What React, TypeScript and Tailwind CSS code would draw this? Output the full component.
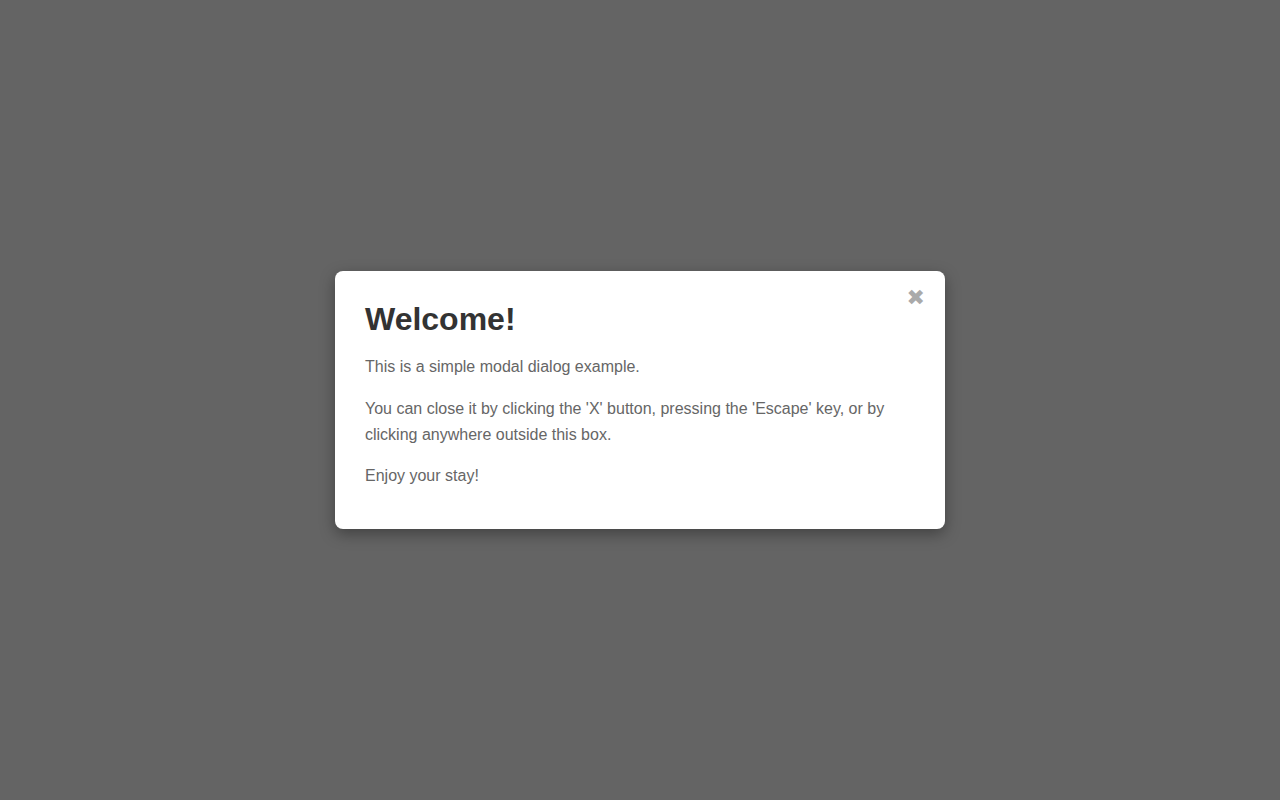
export default function App() {
  return (
    <div className="flex min-h-screen items-center justify-center bg-[#646464] font-['Liberation_Sans',Arial,sans-serif]">
      <div
        role="dialog"
        aria-labelledby="welcome-title"
        className="relative w-[610px] rounded-lg bg-white px-[30px] pt-[30px] pb-[25px] shadow-[0_5px_15px_rgba(0,0,0,0.35)]"
      >
        <button
          type="button"
          aria-label="Close"
          className="absolute right-[20px] top-[16px] text-[22px] leading-none text-[#aaaaaa] font-['DejaVu_Sans',sans-serif]"
        >
          ✖
        </button>
        <h2 id="welcome-title" className="text-[32px] font-bold leading-[37px] text-[#333333]">
          Welcome!
        </h2>
        <div className="mt-[16px] flex flex-col text-base leading-[26px] text-[#666666]">
          <p>This is a simple modal dialog example.</p>
          <p className="mt-4">
            You can close it by clicking the 'X' button, pressing the 'Escape' key, or by
            clicking anywhere outside this box.
          </p>
          <p className="mt-[15px] mb-[15px]">Enjoy your stay!</p>
        </div>
      </div>
    </div>
  );
}
